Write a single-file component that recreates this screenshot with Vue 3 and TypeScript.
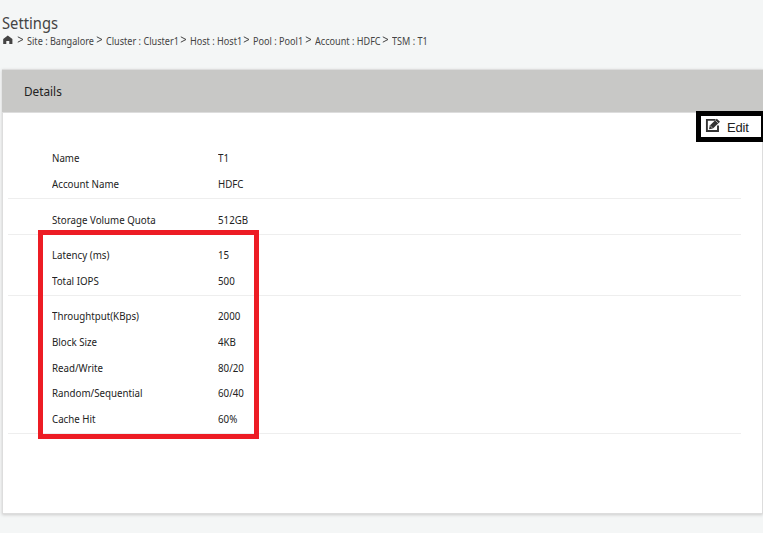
<script setup lang="ts">
interface Crumb { label: string; width: number }
interface Field { label: string; value: string }

const crumbs: Crumb[] = [
  { label: 'Site : Bangalore', width: 69 },
  { label: 'Cluster : Cluster1', width: 74 },
  { label: 'Host : Host1', width: 53 },
  { label: 'Pool : Pool1', width: 52 },
  { label: 'Account : HDFC', width: 67 },
  { label: 'TSM : T1', width: 38 },
]

const groups: Field[][] = [
  [{ label: 'Name', value: 'T1' }, { label: 'Account Name', value: 'HDFC' }],
  [{ label: 'Storage Volume Quota', value: '512GB' }],
  [{ label: 'Latency (ms)', value: '15' }, { label: 'Total IOPS', value: '500' }],
  [
    { label: 'Throughtput(KBps)', value: '2000' },
    { label: 'Block Size', value: '4KB' },
    { label: 'Read/Write', value: '80/20' },
    { label: 'Random/Sequential', value: '60/40' },
    { label: 'Cache Hit', value: '60%' },
  ],
]
</script>

<template>
  <div class="page">
    <h1>Settings</h1>
    <nav class="crumbs">
      <svg class="home" viewBox="0 0 11 10" width="11" height="10">
        <path d="M5.8 0.6 10.4 4V9H7.3V6H4.3V9H1.2V4Z" fill="#444" />
      </svg>
      <template v-for="c in crumbs" :key="c.label">
        <svg class="sep" viewBox="0 0 7 8" width="7" height="8">
          <path d="M.8 .8 6 3.5 .8 6.2" fill="none" stroke="#444" />
        </svg>
        <a class="crumb" :style="{ width: c.width + 'px' }">{{ c.label }}</a>
      </template>
    </nav>
    <section class="panel">
      <header><span>Details</span></header>
      <div class="body">
        <div v-for="(g, i) in groups" :key="i" class="group">
          <div v-for="f in g" :key="f.label" class="row">
            <span class="label">{{ f.label }}</span>
            <span class="value">{{ f.value }}</span>
          </div>
        </div>
      </div>
    </section>
    <div class="highlight"></div>
    <button class="edit">
      <svg viewBox="0 0 16 15" width="16" height="15">
        <path d="M10.5 1.9H1.9V13H13V7.5" fill="none" stroke="#333" stroke-width="1.9" />
        <path d="M4 11.2 4.8 7.4 11.8 .7 15 3.7 7.9 10.6Z" fill="#333" />
        <path d="M5.2 7.8 7.7 10.2M10.4 2.5 13.2 5.1" stroke="#fff" stroke-width=".6" />
      </svg>
      <span>Edit</span>
    </button>
  </div>
</template>

<style>
body { background: #f4f6f6; overflow: hidden; }
</style>
<style scoped>
.page {
  position: relative;
  box-sizing: border-box;
  width: 763px;
  height: 533px;
  padding: 13px 0 0 2px;
  overflow: hidden;
  background: #f4f6f6;
  color: #222;
  font-family: "Noto Sans", sans-serif;
}
h1 { margin: 0; height: 21px; line-height: 20px; font-size: 16px; font-weight: 400; color: #444; transform: scaleX(.92); transform-origin: 0 50%; }
.crumbs { box-sizing: border-box; display: flex; align-items: flex-start; height: 35px; padding-top: 1px; color: #444; font-size: 10px; line-height: 12px; }
.home { flex: none; margin-right: 4px; }
.sep { flex: none; margin: 1px 3px 0 0; }
.crumb { flex: none; white-space: nowrap; transform: scaleX(.91); transform-origin: 0 50%; }
.panel { box-sizing: border-box; width: 761px; height: 445px; border: 1px solid #ddd; background: #fff; box-shadow: 0 1px 3px #ccc; }
header { box-sizing: border-box; height: 43px; margin: 0 -1px; padding-left: 22px; border-bottom: 1px solid #ddd; background: #c8c8c6; line-height: 43px; font-size: 13px; }
header span { display: inline-block; transform: scaleX(.905); transform-origin: 0 50%; }
.body { width: 733px; margin-left: 5px; padding-top: 25.3px; }
.group { padding: 7.2px 0 1.6px; border-bottom: 1px solid #eee; }
.row { display: flex; height: 25.7px; padding-left: 44px; line-height: 25.7px; font-size: 11px; }
.label { width: 166px; }
.label, .value { transform: scaleX(.885); transform-origin: 0 50%; }
.highlight { position: absolute; left: 38px; top: 230px; width: 211px; height: 199px; border: 5px solid #ed1c24; }
.edit { position: absolute; left: 696px; top: 111px; box-sizing: border-box; width: 67px; height: 31px; display: flex; align-items: center; gap: 6px; padding: 0 0 0 4px; border: 5px solid #000; border-right-width: 2px; background: #fff; color: #222; font: 13px "Liberation Sans", sans-serif; }
.edit svg { margin-top: -3px; }
.edit span { padding-top: 1px; letter-spacing: -.2px; }
</style>
